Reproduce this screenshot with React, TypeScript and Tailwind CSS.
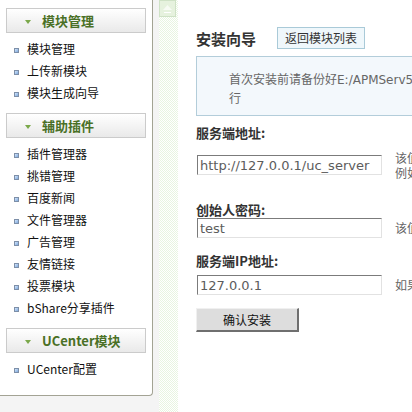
import React from "react";

const cjk = { fontFamily: '"Noto Sans CJK SC", "Liberation Sans", sans-serif' };
const latin = { fontFamily: '"DejaVu Sans", "Noto Sans CJK SC", sans-serif' };

function Header({ title }: { title: string }) {
  return (
    <div className="mx-[6px] h-[25px] border border-[#cbcbcb] bg-gradient-to-b from-white to-[#e9e9e9] flex items-center">
      <svg width="6" height="4" viewBox="0 0 6 4" className="ml-[18px] mt-[2px]">
        <polygon points="0,0 6,0 3,4" fill="#7aa84a" />
      </svg>
      <span className="ml-[11px] text-[13px] font-bold text-[#4a7026] leading-none" style={cjk}>
        {title}
      </span>
    </div>
  );
}

function Item({ label }: { label: string }) {
  return (
    <div className="h-[22px] flex items-center pl-[14px]">
      <span className="w-[5px] h-[5px] border border-[#7d8fa8] bg-gradient-to-br from-[#d4e6fb] to-[#7ea8dc] mt-[2px]" />
      <span className="ml-[8px] text-[12px] text-[#111] leading-none" style={cjk}>
        {label}
      </span>
    </div>
  );
}

function Group({ title, items, pb = "pb-[9px]" }: { title: string; items: string[]; pb?: string }) {
  return (
    <div>
      <Header title={title} />
      <div className={`pt-[5px] ${pb}`}>
        {items.map((i) => (
          <Item key={i} label={i} />
        ))}
      </div>
    </div>
  );
}

function Field({ value }: { value: string }) {
  return (
    <div
      className="w-[185px] h-[20px] ml-px border-t border-l border-[#7b7b7b] border-r border-b border-r-[#e2e2e2] border-b-[#e2e2e2] bg-white flex items-center pl-[2px] text-[13px] text-[#5c5c5c] leading-none"
      style={latin}
    >
      {value}
    </div>
  );
}

export default function App() {
  return (
    <div className="w-[412px] h-[412px] overflow-hidden bg-white flex">
      {/* left column */}
      <div className="w-[159px] h-full bg-[#f4f4f4] shrink-0">
        <div className="w-[153px] h-[396px] bg-white border-r border-b border-[#a3a394] rounded-br-[4px] pt-[8px]">
          <Group title="模块管理" items={["模块管理", "上传新模块", "模块生成向导"]} />
          <Group
            title="辅助插件"
            items={["插件管理器", "挑错管理", "百度新闻", "文件管理器", "广告管理", "友情链接", "投票模块", "bShare分享插件"]}
          />
          <Group title="UCenter模块" items={["UCenter配置"]} pb="pb-0" />
        </div>
      </div>

      {/* splitter */}
      <div className="w-[19px] h-full shrink-0 bg-[repeating-conic-gradient(#e8f5e1_0%_25%,#ffffff_0%_50%)] bg-[length:2px_2px]">
        <div className="w-[17px] h-[17px] bg-[#e6f2de] border border-[#cfe2c6] flex flex-col items-center justify-center gap-[2px]">
          <svg width="9" height="5" viewBox="0 0 9 5">
            <polygon points="0,5 9,5 4.5,0" fill="#f7fbf4" />
          </svg>
          <span className="w-[7px] h-[1px] bg-white" />
        </div>
      </div>

      {/* content */}
      <div className="flex-1 pl-[18px] pt-[27px] text-[#333]" style={cjk}>
        <div className="flex items-center h-[22px]">
          <span className="text-[15px] font-bold text-[#333] leading-none">安装向导</span>
          <span className="ml-[21px] h-[22px] px-[7px] border border-[#a9cad8] bg-[#eff7fb] text-[12px] text-[#333] flex items-center whitespace-nowrap leading-none">
            返回模块列表
          </span>
        </div>

        <div className="mt-[7px] w-[600px] h-[60px] border border-[#b3cdda] bg-[#f3f8fc] pl-[32px] pt-[13px] text-[12px] text-[#666] leading-[17px] whitespace-nowrap">
          <div>
            首次安装前请备份好<span style={latin}>E:/APMServ5.2.6/www/htdocs/</span>
          </div>
          <div>行</div>
        </div>

        <div className="mt-[11px] h-[12px] leading-[12px] text-[13px] font-bold text-[#333]">服务端地址:</div>
        <div className="mt-[11px] h-[30px] flex items-center whitespace-nowrap">
          <Field value="http://127.0.0.1/uc_server" />
          <div className="ml-[13px] text-[12px] text-[#666] leading-[15px]">
            <div>该值为您的服务端地址</div>
            <div>例如：http</div>
          </div>
        </div>

        <div className="mt-[24px] h-[12px] leading-[12px] text-[13px] font-bold text-[#333]">创始人密码:</div>
        <div className="mt-[2px] h-[20px] flex items-center whitespace-nowrap">
          <Field value="test" />
          <div className="ml-[13px] text-[12px] text-[#666] leading-[14px]">该值为创始人密码</div>
        </div>

        <div className="mt-[17px] h-[12px] leading-[12px] text-[13px] font-bold text-[#333]">服务端IP地址:</div>
        <div className="mt-[8px] h-[20px] flex items-center whitespace-nowrap">
          <Field value="127.0.0.1" />
          <div className="ml-[13px] text-[12px] text-[#666] leading-[14px]">如果服务端不能解析</div>
        </div>

        <button className="mt-[13px] w-[103px] h-[24px] bg-[#dddddd] border-t border-l border-[#f0f0f0] border-r-2 border-b-2 border-r-[#6f6f6f] border-b-[#6f6f6f] text-[12px] text-[#111] flex items-center justify-center leading-none">
          确认安装
        </button>
      </div>
    </div>
  );
}
